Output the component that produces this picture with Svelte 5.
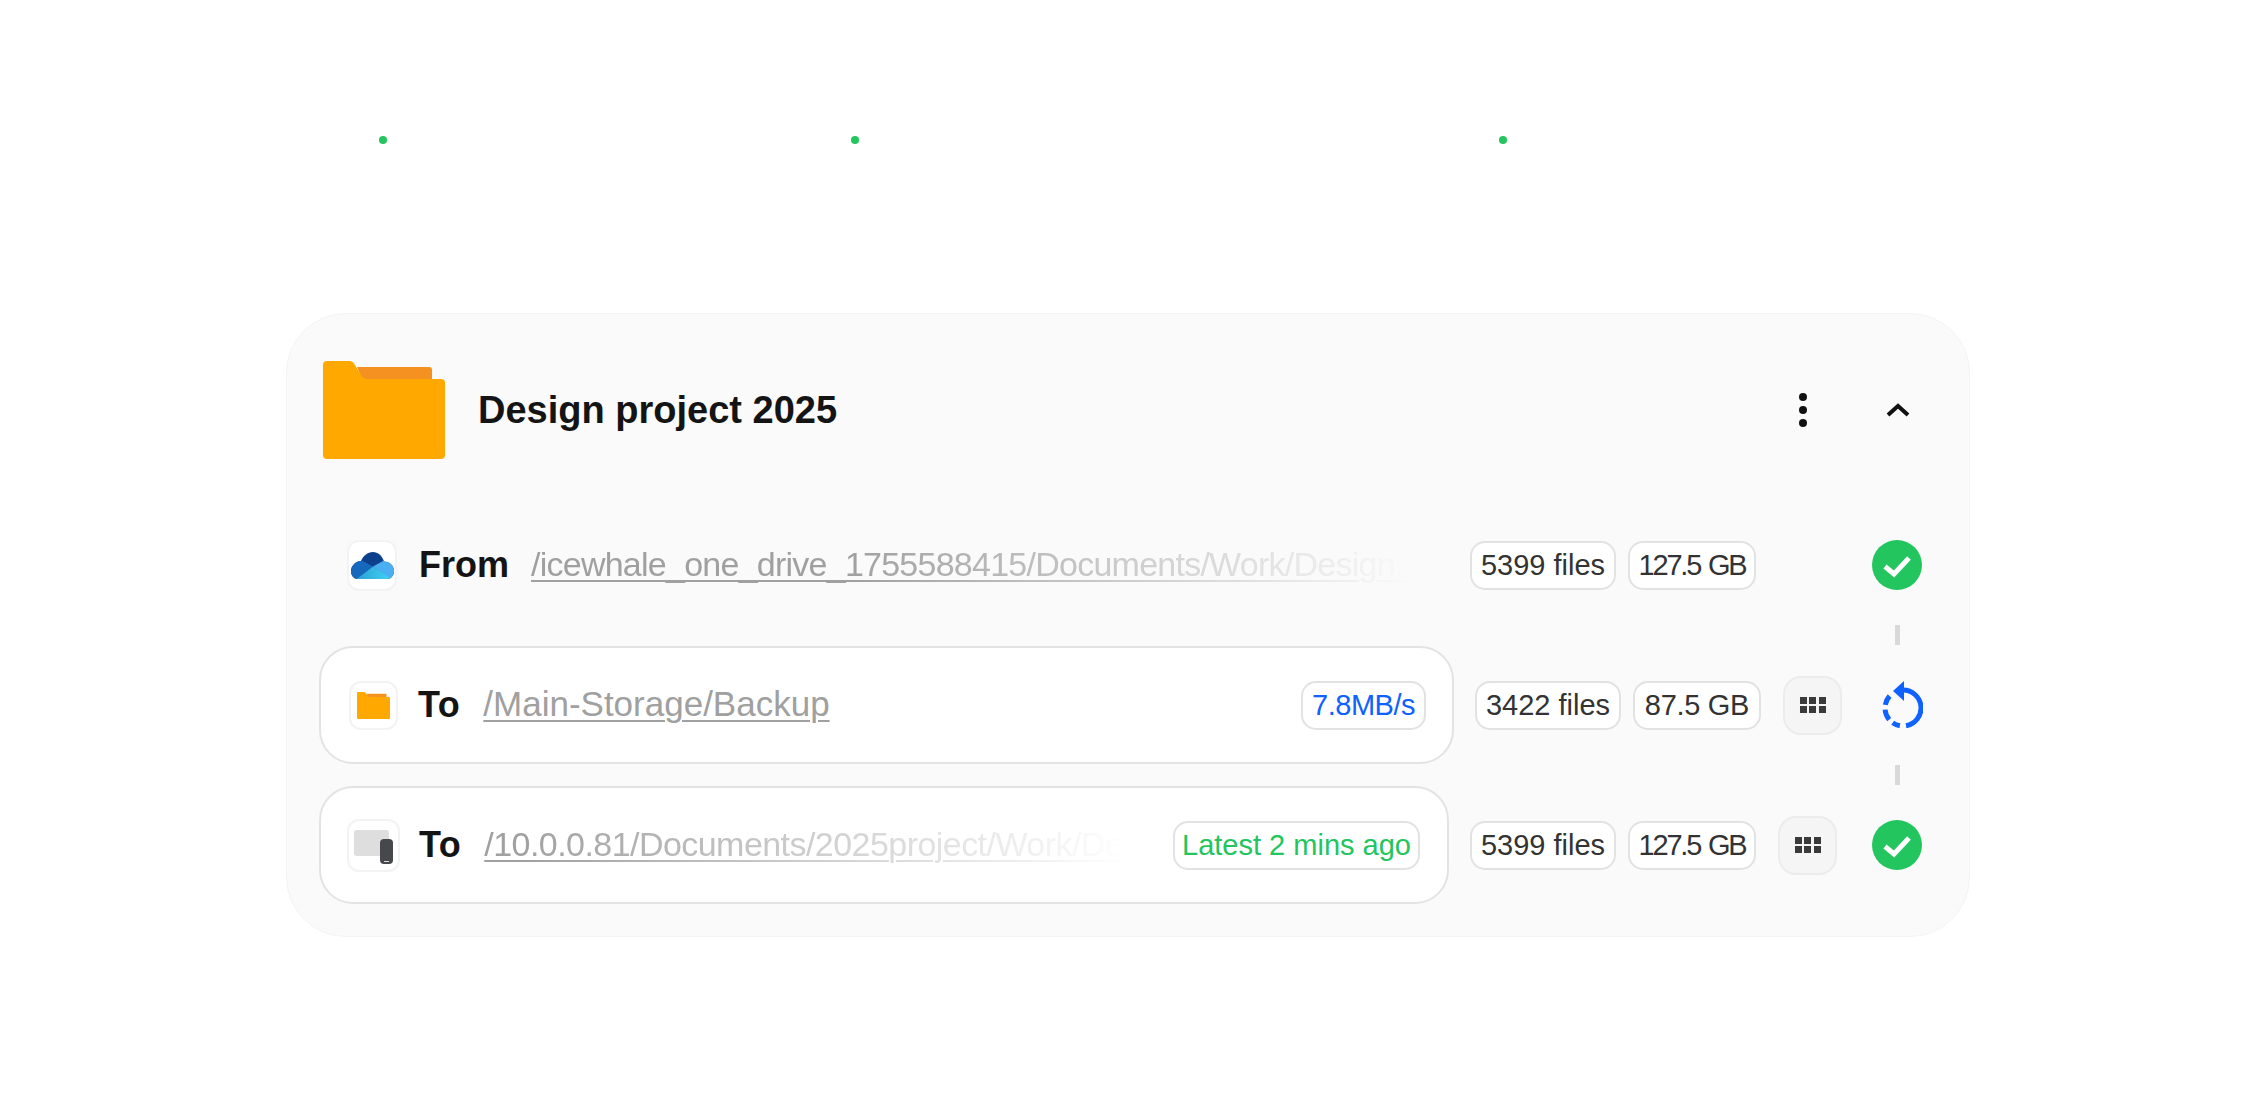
<script>
  const rows = [
    {
      label: 'To', kind: 'folder', path: '/Main-Storage/Backup', pathClass: 'solid',
      badge: '7.8MB/s', badgeClass: 'blue', files: '3422 files', size: '87.5 GB', sizeClass: 'wide', status: 'sync', boxClass: 'r2'
    },
    {
      label: 'To', kind: 'device', path: '/10.0.0.81/Documents/2025project/Work/De...', pathClass: 'fade-early',
      badge: 'Latest 2 mins ago', badgeClass: 'green', files: '5399 files', size: '127.5 GB', sizeClass: 'tight', status: 'done', boxClass: 'r3'
    }
  ];
  const grid = [0, 1, 2, 3, 4, 5];
</script>

{#snippet folderIcon(cls)}
  <svg class={cls} viewBox="0 0 122 98" preserveAspectRatio="none" aria-hidden="true">
    <path fill="#f59120" d="M34 6H106Q109 6 109 9V20H40Z" />
    <path fill="#ffa800" d="M4 0H26Q30 0 32 4L38 14Q40 18 45 18H118Q122 18 122 22V94Q122 98 118 98H4Q0 98 0 94V4Q0 0 4 0Z" />
  </svg>
{/snippet}

{#snippet check()}
  <svg class="status" viewBox="0 0 50 50" aria-hidden="true">
    <circle cx="25" cy="25" r="25" fill="#22c55e" />
    <path d="M13 26.5L22 34L37 18" fill="none" stroke="#fff" stroke-width="5" />
  </svg>
{/snippet}

{#snippet sync()}
  <svg class="status sync" viewBox="0 0 41 47" aria-hidden="true">
    <g fill="none" stroke="#0f62fe" stroke-width="5">
      <path d="M21 9A18 18 0 0 1 24 44.75" />
      <path d="M17.9 44.7A18 18 0 0 1 10.7 41.7" />
      <path d="M7.2 38.6A18 18 0 0 1 3.1 28.6" />
      <path d="M3.3 23.9A18 18 0 0 1 7.6 15" />
    </g>
    <path fill="#0f62fe" d="M11 10L22 0V20Z" />
  </svg>
{/snippet}

{#snippet tail(files, size, sizeClass)}
  <span class="chip files">{files}</span>
  <span class="chip size {sizeClass}">{size}</span>
{/snippet}

<div class="page">
  <div class="dots">
    <span class="dot"></span>
    <span class="dot second"></span>
    <span class="dot third"></span>
  </div>

  <section class="card">
    <header class="head">
      {@render folderIcon('big-folder')}
      <h1>Design project 2025</h1>
      <svg class="more" viewBox="0 0 8 34" aria-hidden="true">
        <circle cx="4" cy="4" r="4" fill="#111" />
        <circle cx="4" cy="17" r="4" fill="#111" />
        <circle cx="4" cy="30" r="4" fill="#111" />
      </svg>
      <svg class="chev" viewBox="0 0 24 14" aria-hidden="true">
        <path d="M2 12L12 3L22 12" fill="none" stroke="#111" stroke-width="4" />
      </svg>
    </header>

    <div class="rows">
      <div class="row">
        <div class="box plain">
          <span class="tile cloud-tile">
            <svg class="cloud" viewBox="0 0 43 27" aria-hidden="true">
              <defs>
                <clipPath id="cloudclip">
                  <path d="M7 27C3 27 0 23.5 0 19.5C0 14 4 9.5 10 9C12 4 16.5 0 22 0C27 0 31 3.5 33 9.5C38.5 9.5 43 13.5 43 19C43 23.5 40 27 36 27Z" />
                </clipPath>
                <linearGradient id="teal" x1="0" y1="0" x2="1" y2="0">
                  <stop offset="0" stop-color="#2b9fd0" />
                  <stop offset="1" stop-color="#3fd6f7" />
                </linearGradient>
              </defs>
              <g clip-path="url(#cloudclip)">
                <rect width="43" height="27" fill="#0c3f8c" />
                <path fill="#1668bd" d="M-2 8L10 8L22 14.5L5 28L-2 28Z" />
                <path fill="#4aaef0" d="M22 14.5L32 9L45 9V28L40 28Z" />
                <path fill="url(#teal)" d="M5 27.5L22 14.5L41 27.5Z" />
              </g>
            </svg>
          </span>
          <span class="label from">From</span>
          <span class="path fade-late">/icewhale_one_drive_1755588415/Documents/Work/Design...</span>
        </div>
        {@render tail('5399 files', '127.5 GB', 'tight')}
        <span class="btn-gap"></span>
        {@render check()}
      </div>

      <div class="link"><span></span></div>

      {#each rows as r, i}
        <div class="row">
          <div class="box {r.boxClass}">
            <span class="tile {r.kind}">
              {#if r.kind === 'folder'}
                {@render folderIcon('small-folder')}
              {:else}
                <span class="tablet"></span>
                <span class="phone"><i></i></span>
              {/if}
            </span>
            <span class="label">{r.label}</span>
            <span class="path {r.pathClass}">{r.path}</span>
            <span class="chip {r.badgeClass}">{r.badge}</span>
          </div>
          {@render tail(r.files, r.size, r.sizeClass)}
          <button class="grid-btn" aria-label="More">
            <span class="grid">
              {#each grid as g}<i></i>{/each}
            </span>
          </button>
          {#if r.status === 'sync'}
            {@render sync()}
          {:else}
            {@render check()}
          {/if}
        </div>
        {#if i === 0}
          <div class="link"><span></span></div>
        {/if}
      {/each}
    </div>
  </section>
</div>

<style>
  :global(body) {
    margin: 0;
    background: #fff;
  }
  .page {
    width: 2256px;
    height: 1097px;
    font-family: "Liberation Sans", Arial, sans-serif;
    overflow: hidden;
  }
  .dots {
    display: flex;
    padding: 136px 0 0 379px;
  }
  .dot {
    width: 8px;
    height: 8px;
    border-radius: 50%;
    background: #22c55e;
  }
  .second { margin-left: 464px; }
  .third { margin-left: 640px; }

  .card {
    box-sizing: border-box;
    width: 1684px;
    height: 624px;
    margin: 169px 0 0 286px;
    padding: 47px 47px 0 32px;
    background: #fafafa;
    border: 1px solid #f4f4f4;
    border-radius: 60px;
  }
  .head {
    display: flex;
    align-items: center;
    height: 98px;
    padding-left: 4px;
    margin-bottom: 47px;
  }
  .big-folder {
    width: 122px;
    height: 98px;
    flex: none;
  }
  h1 {
    margin: 0 0 1px 33px;
    font-size: 38px;
    line-height: 46px;
    font-weight: 700;
    color: #141414;
  }
  .more {
    width: 8px;
    height: 34px;
    margin-left: auto;
    margin-right: 79px;
    flex: none;
  }
  .chev {
    width: 24px;
    height: 14px;
    margin-right: 12px;
    flex: none;
  }

  .rows {
    display: flex;
    flex-direction: column;
  }
  .row {
    display: flex;
    align-items: center;
    height: 118px;
  }
  .link {
    display: flex;
    justify-content: flex-end;
    align-items: flex-start;
    height: 22px;
    padding: 1px 22px 0 0;
    box-sizing: border-box;
  }
  .link span {
    width: 5px;
    height: 20px;
    background: #d9d9d9;
  }

  .box {
    box-sizing: border-box;
    flex: 1;
    min-width: 0;
    height: 118px;
    display: flex;
    align-items: center;
    padding: 0 26px 0 27px;
    margin-right: 21px;
    background: #fff;
    border: 2px solid #e3e3e3;
    border-radius: 34px;
  }
  .box.plain {
    background: transparent;
    border-color: transparent;
    padding: 0 8px 0 26px;
  }
  .box.r3 { padding-left: 26px; padding-right: 27px; }
  .box.r2 { padding-left: 28px; }

  .tile {
    box-sizing: border-box;
    flex: none;
    width: 49px;
    height: 49px;
    display: flex;
    align-items: center;
    justify-content: center;
    background: #fff;
    border: 2px solid #f3f3f3;
    border-radius: 12px;
  }
  .cloud-tile { width: 50px; height: 51px; }
  .cloud { width: 43px; height: 27px; }
  .small-folder { width: 33px; height: 27px; }
  .device {
    position: relative;
    width: 53px;
    height: 53px;
  }
  .tablet {
    position: absolute;
    left: 5px;
    top: 9px;
    width: 35px;
    height: 26px;
    background: #dedede;
    border-radius: 3px;
  }
  .phone {
    position: absolute;
    left: 31px;
    top: 18px;
    width: 13px;
    height: 25px;
    background: #46484c;
    border-radius: 4px;
    display: flex;
    justify-content: center;
    align-items: flex-end;
  }
  .phone i {
    width: 5px;
    height: 1px;
    margin-bottom: 2px;
    background: #ddd;
  }

  .label {
    flex: none;
    margin-left: 20px;
    font-size: 36px;
    line-height: 44px;
    font-weight: 700;
    color: #141414;
    letter-spacing: 0.5px;
  }
  .device + .label { margin-left: 19px; }
  .from { margin-left: 22px; letter-spacing: 0; }
  .path {
    flex: 1;
    min-width: 0;
    margin: 0 0 2px 23px;
    font-size: 35px;
    line-height: 44px;
    color: #a0a0a0;
    white-space: nowrap;
    overflow: hidden;
    text-decoration: underline;
    text-decoration-thickness: 2px;
    text-underline-offset: 4px;
  }
  .from + .path { margin-left: 22px; }
  .fade-late {
    font-size: 34px;
    letter-spacing: -0.75px;
    -webkit-mask-image: linear-gradient(to right, #000 35%, transparent 97%);
    mask-image: linear-gradient(to right, #000 35%, transparent 97%);
  }
  .fade-early {
    margin-right: 12px;
    font-size: 34px;
    letter-spacing: -0.55px;
    -webkit-mask-image: linear-gradient(to right, #000 5%, transparent 95%);
    mask-image: linear-gradient(to right, #000 5%, transparent 95%);
  }

  .chip {
    box-sizing: border-box;
    flex: none;
    height: 49px;
    display: flex;
    align-items: center;
    justify-content: center;
    padding: 0 9px;
    background: #fff;
    border: 2px solid #e2e2e2;
    border-radius: 15px;
    font-size: 29px;
    color: #333;
    white-space: nowrap;
  }
  .files { width: 146px; margin-right: 12px; }
  .size { width: 128px; letter-spacing: -0.3px; }
  .tight { letter-spacing: -2.2px; word-spacing: 2px; }
  .blue { color: #0f62fe; width: 125px; letter-spacing: -0.5px; }
  .green { color: #22c55e; width: 247px; }

  .grid-btn {
    box-sizing: border-box;
    flex: none;
    width: 59px;
    height: 59px;
    padding: 0;
    margin-left: 22px;
    display: flex;
    align-items: center;
    justify-content: center;
    background: #f5f5f5;
    border: 2px solid #ececec;
    border-radius: 18px;
  }
  .btn-gap {
    flex: none;
    width: 59px;
    margin-left: 22px;
  }
  .grid {
    display: grid;
    grid-template-columns: repeat(3, 7px);
    grid-auto-rows: 6.5px;
    gap: 2.5px;
  }
  .grid i { background: #3a3a3a; }
  .status {
    flex: none;
    width: 50px;
    height: 50px;
    margin-left: 35px;
  }
  .status.sync {
    width: 41px;
    height: 47px;
    margin-left: 40px;
    margin-right: -1px;
    margin-top: -1px;
  }
</style>
